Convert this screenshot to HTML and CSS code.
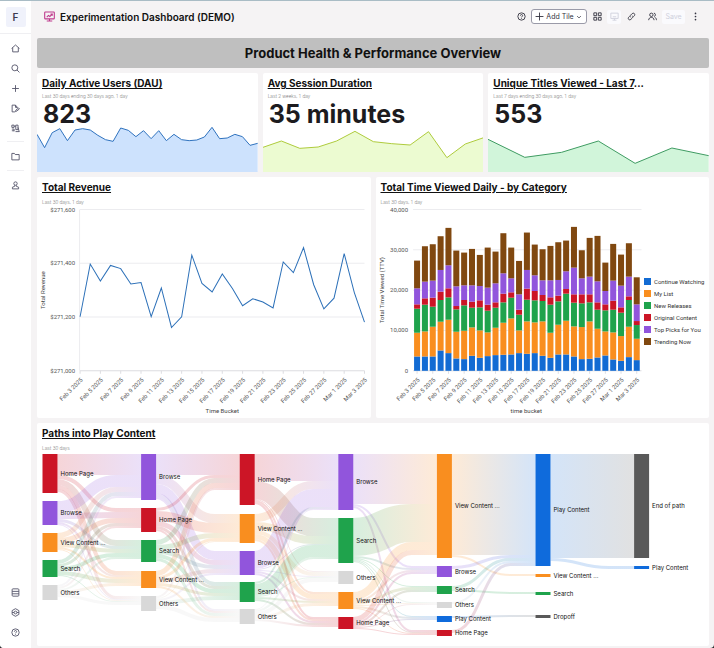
FILE: index.html
```
<!DOCTYPE html>
<html lang="en">
<head>
    <meta charset="UTF-8">
    <meta name="viewport" content="width=device-width, initial-scale=1.0">
    <title>Experimentation Dashboard (DEMO)</title>
    <link rel="stylesheet" href="styles.css">
</head>
<body>
    <div class="app">
        <!-- Sidebar -->
        <nav class="sidebar" aria-label="Main">
            <a class="workspace" href="#">F</a>
            <div class="nav-group nav-first">
                <a class="nav-link" href="#" aria-label="Home"><svg class="icon" viewBox="0 0 16 16"><path d="M1 8 8 1.800 15 8M3 6.500v7.500h10V6.500"/></svg></a>
                <a class="nav-link" href="#" aria-label="Search"><svg class="icon" viewBox="0 0 16 16"><circle cx="6.800" cy="6.800" r="5.300"/><path d="m10.500 10.500 4.500 4.500"/></svg></a>
                <a class="nav-link" href="#" aria-label="Create"><svg class="icon" viewBox="0 0 16 16"><path d="M8 2v12M2 8h12"/></svg></a>
                <a class="nav-link" href="#" aria-label="Notebooks"><svg class="icon" viewBox="0 0 16 16"><path d="M7 14H2V2h6l3 3.500v2M8 2v4h3M8 13.500l.5-2.500 5-4 1.500 1.700-5 4z"/></svg></a>
                <a class="nav-link" href="#" aria-label="Templates"><svg class="icon" viewBox="0 0 16 16"><path d="M1.500 2h4v4h-4zM8.500 2h4v8h-4zM1.500 9h4M1.500 12h4M5.500 9v4M8 13.500h7M12.500 6l2 7.500M5.500 4h3"/></svg></a>
            </div>
            <div class="nav-group">
                <a class="nav-link" href="#" aria-label="Files"><svg class="icon" viewBox="0 0 16 16"><path d="M1.500 2.500h4.500l1.500 2h7v9.500h-13z"/></svg></a>
            </div>
            <div class="nav-group">
                <a class="nav-link" href="#" aria-label="Users"><svg class="icon" viewBox="0 0 16 16"><circle cx="8" cy="4.500" r="3"/><path d="M6.500 7.500v2L2.500 11v3h11v-3l-4-1.500v-2"/></svg></a>
            </div>
            <div class="nav-bottom">
                <a class="nav-link" href="#" aria-label="Data"><svg class="icon" viewBox="0 0 16 16"><rect x="2" y="1.500" width="12" height="13" rx="1.500"/><path d="M2 6h12M2 10.300h12"/></svg></a>
                <a class="nav-link" href="#" aria-label="Settings"><svg class="icon" viewBox="0 0 16 16"><path d="M8 1.200 14 4.600v6.800L8 14.800 2 11.400V4.600z"/><circle cx="8" cy="8" r="2.500"/><path d="M2 8h3.500M10.500 8H14"/></svg></a>
                <a class="nav-link" href="#" aria-label="Help"><svg class="icon" viewBox="0 0 16 16"><circle cx="8" cy="8" r="6.500"/><path d="M6 6.500c0-2.700 4-2.700 4 0C10 8 8 8 8 9.500M8 11v1.200"/></svg></a>
            </div>
        </nav>

        <main class="main">
            <header class="header">
                <svg class="title-icon" viewBox="0 0 16 16"><rect x="1" y="1.500" width="14" height="10" rx="1"/><path d="M8 11.500v3M4 14.500h8M4 9l2.500-2.500L8.500 8 12 4.500M9.500 4.500H12V7"/></svg>
                <h1 class="title">Experimentation Dashboard (DEMO)</h1>
                <div class="toolbar">
                    <button class="icon-btn" aria-label="Help"><svg class="icon" viewBox="0 0 16 16"><circle cx="8" cy="8" r="6.500"/><path d="M6 6.500c0-2.700 4-2.700 4 0C10 8 8 8 8 9.500M8 11v1.200"/></svg></button>
                    <button class="add-btn">
                        <svg class="icon" viewBox="0 0 16 16"><path d="M8 1v14M1 8h14"/></svg>
                        Add Tile
                        <svg class="chevron" viewBox="0 0 16 16"><path d="m3 5.500 5 5 5-5"/></svg>
                    </button>
                    <button class="icon-btn" aria-label="Layout"><svg class="icon" viewBox="0 0 16 16"><path d="M1.500 1.500h5v5h-5zM9.500 1.500h5v5h-5zM1.500 9.500h5v5h-5zM9.500 9.500h5v5h-5z"/></svg></button>
                    <button class="icon-btn boxed" aria-label="Present" disabled><svg class="icon" viewBox="0 0 16 16"><path d="M1.500 2h13v9.500h-13zM8 11.500v3M4.500 14.500h7M5 8.500h6"/></svg></button>
                    <button class="icon-btn" aria-label="Copy link"><svg class="icon" viewBox="0 0 16 16"><path d="M6.500 9.500c-1.300-1.300-1.200-2.800 0-4l2.700-2.700c2.700-2.300 6 1 4 3.700l-1.700 1.700M9.500 6.500c1.300 1.300 1.200 2.800 0 4l-2.700 2.700c-2.700 2.300-6-1-4-3.700l1.700-1.700"/></svg></button>
                    <button class="icon-btn share" aria-label="Share"><svg class="icon" viewBox="0 0 16 16"><circle cx="6" cy="5" r="3"/><path d="M1.200 14.500c0-6.500 9.600-6.500 9.600 0M10.500 2c3.500 0 3.500 5.500.5 6M12 9.500c2 .7 3 2.500 3 5"/></svg></button>
                    <button class="save-btn" disabled>Save</button>
                    <button class="icon-btn" aria-label="More"><svg class="icon dots" viewBox="0 0 16 16"><circle cx="8" cy="2.500" r="1.500"/><circle cx="8" cy="8" r="1.500"/><circle cx="8" cy="13.500" r="1.500"/></svg></button>
                </div>
            </header>

            <div class="board">
                <h2 class="banner">Product Health &amp; Performance Overview</h2>

                <div class="kpis">
                    <section class="card kpi">
                        <h3 class="card-title"><a href="#">Daily Active Users (DAU)</a></h3>
                        <p class="card-sub">Last 30 days ending 30 days ago, 1 day</p>
                        <p class="kpi-value">823</p>
                        <svg class="spark spark-blue" id="dau" viewBox="0 0 300 138" preserveAspectRatio="none"></svg>
                    </section>
                    <section class="card kpi">
                        <h3 class="card-title"><a href="#">Avg Session Duration</a></h3>
                        <p class="card-sub">Last 2 weeks, 1 day</p>
                        <p class="kpi-value">35 minutes</p>
                        <svg class="spark spark-lime" id="session" viewBox="0 0 300 138" preserveAspectRatio="none"></svg>
                    </section>
                    <section class="card kpi">
                        <h3 class="card-title"><a href="#">Unique Titles Viewed - Last 7</a>...</h3>
                        <p class="card-sub">Last 7 days ending 30 days ago, 1 day</p>
                        <p class="kpi-value">553</p>
                        <svg class="spark spark-green" id="titles" viewBox="0 0 300 138" preserveAspectRatio="none"></svg>
                    </section>
                </div>

                <div class="charts">
                    <section class="card">
                        <h3 class="card-title"><a href="#">Total Revenue</a></h3>
                        <p class="card-sub">Last 30 days, 1 day</p>
                        <svg class="chart" id="revenue" viewBox="0 0 333 213"></svg>
                    </section>
                    <section class="card">
                        <h3 class="card-title"><a href="#">Total Time Viewed Daily - by Category</a></h3>
                        <p class="card-sub">Last 30 days, 1 day</p>
                        <div class="with-legend">
                            <svg class="chart" id="viewed" viewBox="0 0 267 213"></svg>
                            <ul class="legend">
                                <li><span class="swatch blue"></span>Continue Watching</li>
                                <li><span class="swatch orange"></span>My List</li>
                                <li><span class="swatch green"></span>New Releases</li>
                                <li><span class="swatch red"></span>Original Content</li>
                                <li><span class="swatch purple"></span>Top Picks for You</li>
                                <li><span class="swatch brown"></span>Trending Now</li>
                            </ul>
                        </div>
                    </section>
                </div>

                <section class="card">
                    <h3 class="card-title"><a href="#">Paths into Play Content</a></h3>
                    <p class="card-sub">Last 30 days</p>
                    <svg class="chart" id="paths" viewBox="0 0 672 195"></svg>
                </section>
            </div>
        </main>
    </div>
    <script src="charts.js"></script>
</body>
</html>
```

FILE: styles.css
```
* {
    box-sizing: border-box;
}
html {
    background-color: #2b2f31;
}
body {
    margin: 0;
    font-family: Inter, "Liberation Sans", sans-serif;
    color: #111;
}
h1, h2, h3, p, ul {
    margin: 0;
    padding: 0;
}
a {
    color: inherit;
}
button {
    font-family: inherit;
    padding: 0;
    border: none;
    background: none;
    color: #333340;
    cursor: pointer;
}
.app {
    display: flex;
    min-height: 100vh;
    border-top: 1px solid #a9bcc5;
    border-radius: 0 0 4px 4px;
    background-color: #f5f3f4;
    overflow: hidden;
}

/* Sidebar */
.sidebar {
    flex: none;
    width: 31px;
    display: flex;
    flex-direction: column;
    background-color: #fff;
    padding-bottom: 6px;
}
.workspace {
    width: 20px;
    height: 20px;
    margin: 6px auto;
    border-radius: 2px;
    background-color: #f0f2fb;
    color: #3c3c50;
    font-size: 10px;
    font-weight: 600;
    line-height: 20px;
    text-align: center;
    text-decoration: none;
}
.nav-group {
    margin: 0 7px;
    padding: 4px 0;
    border-top: 1px solid #efeff2;
}
.nav-first {
    margin: 0;
    padding: 4px 7px 3px;
}
.nav-bottom {
    margin: auto 7px 0;
}
.nav-link {
    display: flex;
    align-items: center;
    justify-content: center;
    height: 20px;
    color: #55556a;
}
.icon {
    width: 9px;
    height: 9px;
    fill: none;
    stroke: currentColor;
    stroke-width: 1.6;
}

/* Header */
.main {
    flex: 1;
    min-width: 0;
}
.header {
    display: flex;
    align-items: center;
    height: 37px;
    padding: 0 12px 6px 13px;
}
.title-icon {
    width: 11px;
    height: 11px;
    margin-right: 5px;
    fill: none;
    stroke: #bf3b8d;
    stroke-width: 1.6;
}
.title {
    font-size: 10px;
    font-weight: 600;
}
.toolbar {
    display: flex;
    align-items: center;
    gap: 3px;
    margin-left: auto;
}
.icon-btn {
    display: flex;
    align-items: center;
    justify-content: center;
    width: 14px;
    height: 14px;
}
.boxed, .save-btn {
    border-radius: 2px;
    background-color: #fafafd;
    color: #cfd0dc;
}
.share {
    margin-left: 4px;
}
.add-btn {
    display: flex;
    align-items: center;
    justify-content: space-between;
    width: 56px;
    height: 15px;
    padding: 0 4px 0 3px;
    border: 1px solid #9a9aa8;
    border-radius: 3px;
    background-color: #fff;
    font-size: 7px;
}
.chevron {
    width: 6px;
    height: 6px;
    fill: none;
    stroke: currentColor;
    stroke-width: 2;
}
.save-btn {
    width: 23px;
    height: 14px;
    font-size: 7px;
}
.dots {
    fill: currentColor;
    stroke: none;
}

/* Board */
.board {
    display: flex;
    flex-direction: column;
    gap: 5px;
    padding: 0 5px 2px 6px;
}
.banner {
    border-radius: 2px;
    background-color: #bfbfbf;
    font-size: 13px;
    font-weight: 700;
    line-height: 30px;
    text-align: center;
}
.kpis {
    display: grid;
    grid-template-columns: repeat(3, 1fr);
    gap: 5px;
}
.charts {
    display: grid;
    grid-template-columns: repeat(2, 1fr);
    gap: 5px;
}
.card {
    min-width: 0;
    padding-top: 4px;
    border-radius: 2px;
    background-color: #fff;
}
.card-title {
    padding: 0 5px;
    font-size: 10px;
    font-weight: 700;
    line-height: 13px;
    white-space: nowrap;
}
.card-sub {
    margin-top: 5px;
    padding: 0 5px;
    color: #777;
    font-family: Roboto, sans-serif;
    font-size: 5px;
    font-weight: 300;
    line-height: 6px;
}
.kpi .card-sub {
    margin-top: 3px;
}
.kpi-value {
    margin-top: 4px;
    padding: 0 6px;
    color: #1c1b1e;
    font-size: 25px;
    font-weight: 700;
    line-height: 23px;
}
.spark {
    display: block;
    width: 100%;
    height: 46px;
}
.spark polyline {
    fill: none;
    stroke-width: 1;
    vector-effect: non-scaling-stroke;
}
.spark-blue polygon { fill: #cde2fd; }
.spark-blue polyline { stroke: #2f72be; }
.spark-lime polygon { fill: #ecfbd1; }
.spark-lime polyline { stroke: #aecb3c; }
.spark-green polygon { fill: #d1f5da; }
.spark-green polyline { stroke: #3f9b62; }

/* Charts */
.chart {
    display: block;
    width: 100%;
}
.with-legend {
    display: flex;
    align-items: center;
}
.with-legend .chart {
    flex: 1;
    min-width: 0;
}
.legend {
    flex: none;
    width: 66px;
    list-style: none;
    color: #333;
    font-family: Roboto, sans-serif;
    font-size: 6px;
    line-height: 12px;
    white-space: nowrap;
}
.legend li {
    display: flex;
    align-items: center;
    gap: 3px;
    padding-left: 1px;
}
.swatch {
    width: 7px;
    height: 7px;
}
.blue { fill: #126bd3; background-color: #126bd3; }
.orange { fill: #f98e1f; background-color: #f98e1f; }
.green { fill: #1fa34c; background-color: #1fa34c; }
.red { fill: #cc1526; background-color: #cc1526; }
.purple { fill: #9155dc; background-color: #9155dc; }
.brown { fill: #804810; background-color: #804810; }
.grid {
    stroke: #ececef;
}
.axis {
    stroke: #dcdce0;
}
.axis-label {
    fill: #555;
    font-family: Roboto, sans-serif;
    font-size: 6px;
}
.axis-title {
    fill: #444;
    font-family: Roboto, sans-serif;
    font-size: 6px;
    text-anchor: middle;
}
.end {
    text-anchor: end;
}
.line {
    fill: none;
    stroke: #2c70b8;
    stroke-width: 1;
}
.link {
    fill: none;
    stroke-opacity: 0.18;
}
.node-label {
    fill: #111;
    font-size: 6px;
}
```

FILE: charts.js
```
// Sparklines: heights on a 0-138 scale
function drawSpark(id, values) {
    const step = 300 / (values.length - 1);
    const points = values.map((v, i) => `${i * step},${138 - v}`).join(' ');
    document.getElementById(id).innerHTML =
        `<polygon points="0,138 ${points} 300,138"/><polyline points="${points}"/>`;
}

drawSpark('dau', [113, 73, 118, 130, 94, 126, 130, 126, 110, 97, 92, 132, 125, 106, 124, 100, 124, 94, 113, 97,
    94, 96, 105, 134, 100, 102, 113, 106, 80, 86]);
drawSpark('session', [74, 93, 71, 75, 93, 122, 91, 85, 81, 121, 43, 84, 103]);
drawSpark('titles', [98, 44, 59, 93, 26, 72, 49]);

// Every second day from Feb 3 to Mar 3
const dates = [];
for (let day = 3; day <= 27; day += 2) {
    dates.push(`Feb ${day} 2025`);
}
dates.push('Mar 1 2025', 'Mar 3 2025');

const TOP = 4.5;
const BOTTOM = 165.5;

function drawAxes(left, right, labels, firstX, stepX) {
    let out = '';
    labels.forEach((label, i) => {
        const y = BOTTOM - i * (BOTTOM - TOP) / (labels.length - 1);
        out += `<line class="${i ? 'grid' : 'axis'}" x1="${left}" y1="${y}" x2="${right}" y2="${y}"/>`;
        out += `<text class="axis-label end" x="${left - 5}" y="${y + 2}">${label}</text>`;
    });
    dates.forEach((label, i) => {
        const x = firstX + i * stepX;
        out += `<line class="axis" x1="${x}" y1="${BOTTOM}" x2="${x}" y2="${BOTTOM + 3}"/>`;
        out += `<text class="axis-label end" transform="translate(${x + 3} 175) rotate(-45)">${label}</text>`;
    });
    return out;
}

// Total revenue, dollars above 271,000
const revenue = [201, 397, 334, 392, 380, 323, 328, 201, 308, 161, 201, 430, 325, 293, 360, 306, 242, 268, 256, 234,
    405, 365, 458, 320, 230, 270, 436, 291, 181];

function drawRevenue() {
    const step = 284 / 28;
    const points = revenue.map((v, i) => `${43 + i * step},${BOTTOM - v / 600 * (BOTTOM - TOP)}`).join(' ');
    document.getElementById('revenue').innerHTML =
        drawAxes(43, 327, ['$271,000', '$271,200', '$271,400', '$271,600'], 43, step * 2) +
        `<line class="grid" x1="42.5" y1="${TOP}" x2="42.5" y2="${BOTTOM}"/>` +
        `<polyline class="line" points="${points}"/>` +
        '<text class="axis-title" x="185" y="208">Time Bucket</text>' +
        '<text class="axis-title" transform="translate(8 85) rotate(-90)">Total Revenue</text>';
}
drawRevenue();

// Running totals per day in units of 83 views, in legend order
const categories = ['blue', 'orange', 'green', 'red', 'purple', 'brown'];
const viewed = [
    [43, 114, 186, 199, 247, 330], [43, 118, 198, 217, 267, 373], [43, 132, 192, 219, 270, 379],
    [61, 147, 212, 237, 302, 403], [53, 153, 220, 247, 316, 428], [37, 117, 184, 194, 253, 360],
    [35, 120, 196, 212, 256, 354], [45, 130, 189, 207, 256, 365], [39, 121, 190, 211, 254, 347],
    [44, 115, 180, 198, 249, 369], [47, 129, 189, 205, 262, 357], [48, 144, 205, 231, 292, 412],
    [49, 157, 219, 235, 277, 369], [53, 121, 168, 183, 229, 329], [51, 148, 213, 246, 302, 414],
    [53, 145, 211, 239, 286, 378], [45, 148, 209, 227, 271, 364], [39, 114, 198, 220, 271, 374],
    [49, 138, 208, 225, 272, 385], [49, 150, 231, 245, 298, 390], [43, 133, 204, 229, 309, 431],
    [35, 131, 202, 229, 277, 361], [36, 148, 205, 229, 282, 398], [40, 126, 183, 205, 268, 404],
    [46, 118, 181, 199, 239, 324], [34, 115, 183, 210, 270, 380], [30, 104, 174, 190, 255, 348],
    [41, 132, 212, 223, 282, 382], [32, 96, 137, 149, 199, 280]
];

function drawViewed() {
    const step = 7.83;
    let out = drawAxes(37, 265, ['0', '10,000', '20,000', '30,000', '40,000'], 41, step * 2);
    viewed.forEach((day, i) => {
        let below = 0;
        day.forEach((total, k) => {
            const y = BOTTOM - total / 3;
            out += `<rect class="${categories[k]}" x="${38 + i * step}" y="${y}" width="6" height="${(total - below) / 3}"/>`;
            below = total;
        });
    });
    out += '<text class="axis-title" x="150" y="208">time bucket</text>';
    out += '<text class="axis-title" transform="translate(8 85) rotate(-90)">Total Time Viewed (TTV)</text>';
    document.getElementById('viewed').innerHTML = out;
}
drawViewed();

// Paths: one list per step, each node is [name, top, height, outgoing widths to the next step]
const colors = {
    'Home Page': '#cc1526', 'Browse': '#9155dc', 'View Content ...': '#f98e1f', 'Search': '#1fa34c',
    'Others': '#d8d8d8', 'Play Content': '#0f6bdc', 'Dropoff': '#595959', 'End of path': '#595959'
};
const steps = [
    [
        ['Home Page', 3, 39, [21, 4, 6, 4, 3]],
        ['Browse', 50, 24, [12, 6, 3, 2, 1]],
        ['View Content ...', 82, 19, [5, 5, 4, 2, 1]],
        ['Search', 109, 17, [4, 3, 4, 4, 1]],
        ['Others', 134, 15, [2, 2, 2, 3, 3]]
    ], [
        ['Browse', 3, 46, [21, 9, 9, 4, 2]],
        ['Home Page', 57, 24, [3, 10, 5, 3, 2]],
        ['Search', 89, 22, [5, 5, 4, 4, 3]],
        ['View Content ...', 120, 17, [5, 3, 4, 3, 2]],
        ['Others', 145, 15, [2, 1, 2, 4, 4]]
    ], [
        ['Home Page', 3, 51, [27, 18, 1, 2, 2]],
        ['View Content ...', 63, 29, [8, 8, 4, 5, 2]],
        ['Browse', 100, 24, [18, 1, 1, 2, 2]],
        ['Search', 131, 20, [2, 12, 1, 2, 2]],
        ['Others', 158, 15, [1, 2, 4, 3, 2]]
    ], [
        ['Browse', 3, 56, [50, 2, 0, 0, 0, 2]],
        ['Search', 67, 45, [38, 2, 1, 1, 1, 1]],
        ['Others', 120, 13, [0, 0, 0, 0, 0, 0]],
        ['View Content ...', 141, 17, [8, 2, 3, 1, 2, 1]],
        ['Home Page', 166, 12, [5, 2, 2, 1, 1, 1]]
    ], [
        ['View Content ...', 3, 104, [101, 2, 0, 0]],
        ['Browse', 115, 11, [3, 0, 0, 0]],
        ['Search', 135, 8, [3, 0, 2, 0]],
        ['Others', 151, 6, [2, 0, 0, 0]],
        ['Play Content', 165, 6, [0, 0, 0, 2]],
        ['Home Page', 179, 6, [3, 0, 0, 0]]
    ], [
        ['Play Content', 3, 112, [104, 3]],
        ['View Content ...', 123, 3, []],
        ['Search', 141, 3, []],
        ['Dropoff', 164, 3, []]
    ], [
        ['End of path', 3, 104, []],
        ['Play Content', 115, 3, []]
    ]
];

function drawPaths() {
    const pitch = 98.6;
    const nodeWidth = 15;
    let defs = '';
    let links = '';
    let nodes = '';
    steps.forEach((column, c) => {
        const x = 5.5 + c * pitch;
        const next = steps[c + 1] || [];
        const used = next.map(() => 0);
        const x1 = x + nodeWidth;
        const x2 = x + pitch;
        // links bend over the first part of the gap, then run straight into the node
        const bend = x1 + (x2 - x1) * 0.7;
        const mid = (x1 + bend) / 2;
        column.forEach(([name, top, height, out]) => {
            let offset = 0;
            out.forEach((w, t) => {
                if (!w) return;
                const id = `${c}-${name}-${t}`.replace(/[ .]/g, '');
                const y1 = top + offset + w / 2;
                const y2 = next[t][1] + used[t] + w / 2;
                offset += w;
                used[t] += w;
                defs += `<linearGradient id="${id}" gradientUnits="userSpaceOnUse" x1="${x1}" x2="${x2}" y1="0" y2="0">` +
                    `<stop offset="0" stop-color="${colors[name]}"/><stop offset="1" stop-color="${colors[next[t][0]]}"/></linearGradient>`;
                links += `<path class="link" stroke="url(#${id})" stroke-width="${w}" ` +
                    `d="M${x1} ${y1}C${mid} ${y1} ${mid} ${y2} ${bend} ${y2}H${x2}"/>`;
            });
            nodes += `<rect x="${x}" y="${top}" width="${nodeWidth}" height="${height}" fill="${colors[name]}"/>`;
            nodes += `<text class="node-label" x="${x1 + 3}" y="${top + height / 2 + 2}">${name}</text>`;
        });
    });
    document.getElementById('paths').innerHTML = `<defs>${defs}</defs>${links}${nodes}`;
}
drawPaths();
```
